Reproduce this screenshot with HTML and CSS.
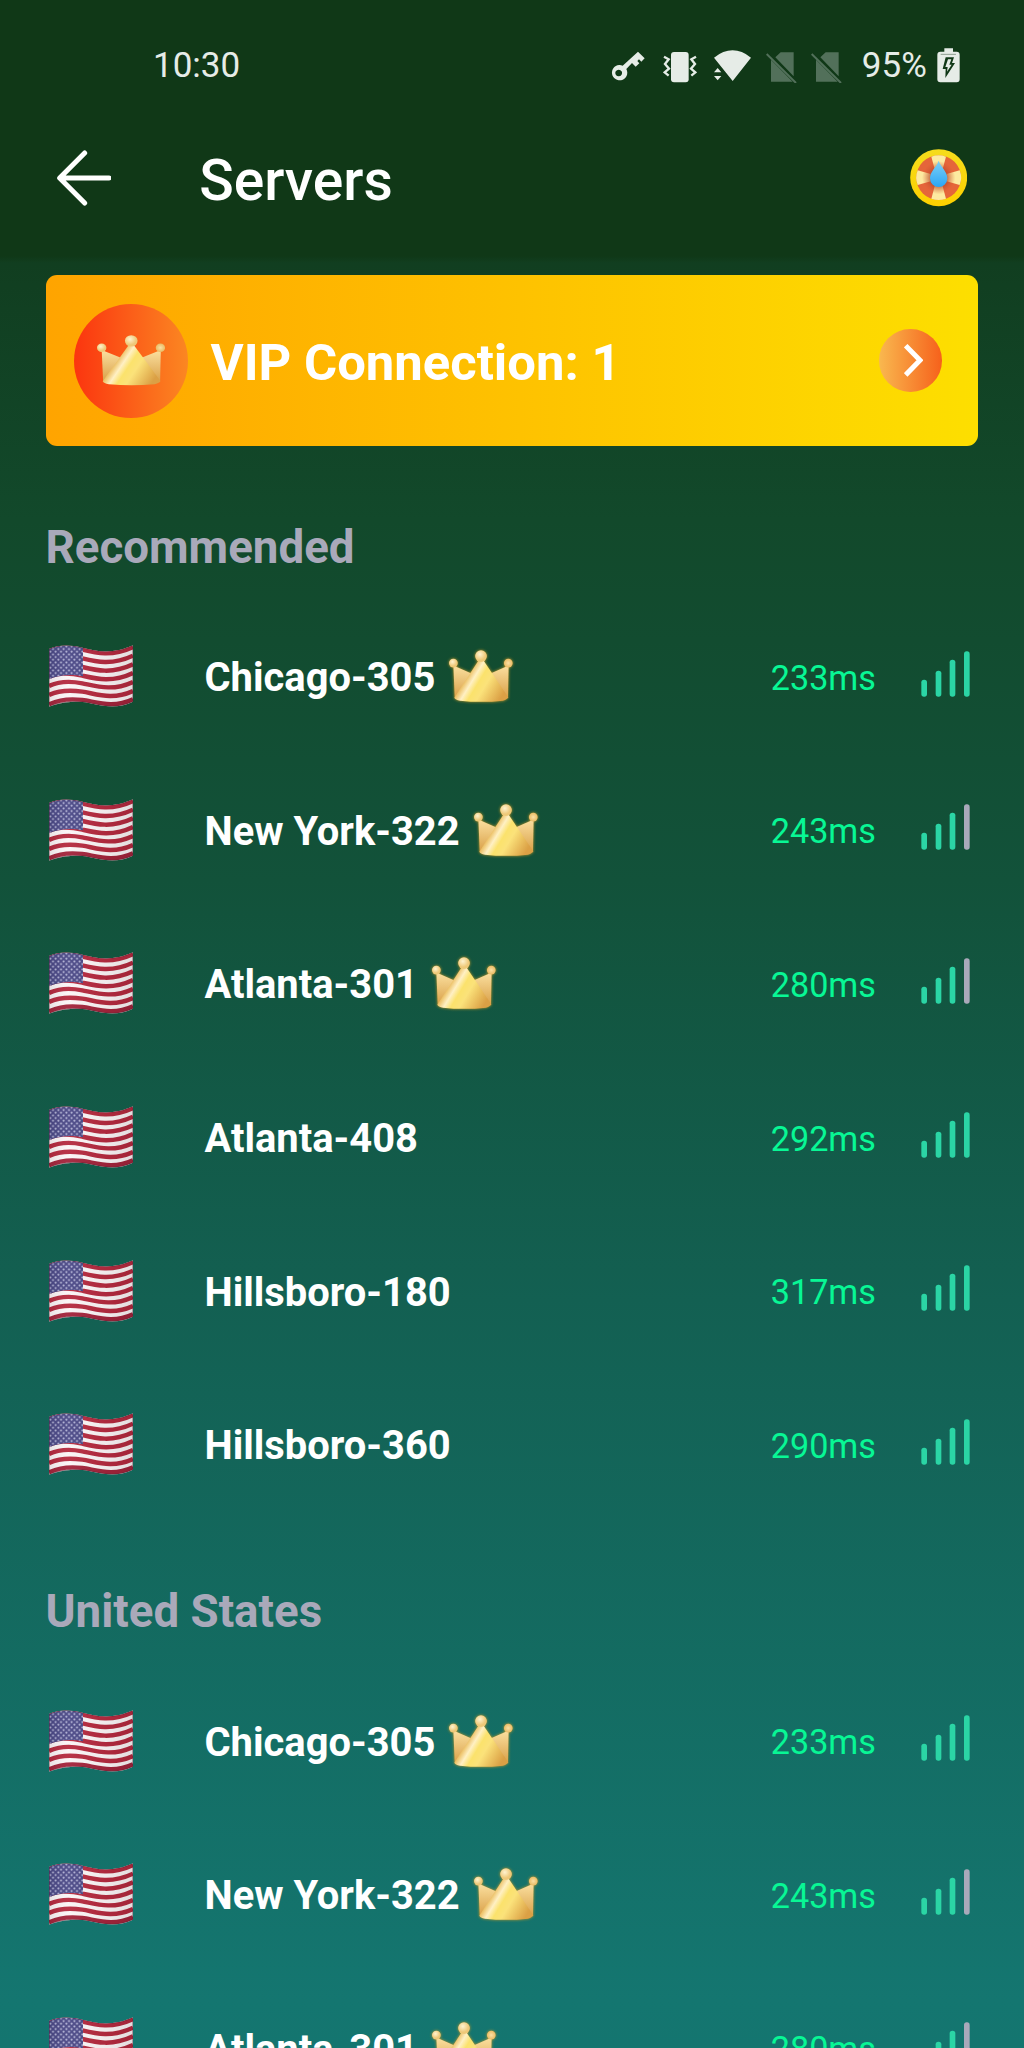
FILE: index.html
```html
<!DOCTYPE html>
<html lang="en">
<head>
<meta charset="utf-8">
<title>Servers</title>
<link rel="stylesheet" href="styles.css">
</head>
<body>
<svg class="defs" width="0" height="0" aria-hidden="true">
  <defs>
    <linearGradient id="gold" x1="17" y1="70" x2="150" y2="150" gradientUnits="userSpaceOnUse">
      <stop offset="0" stop-color="#dca64c"/><stop offset=".25" stop-color="#edc36b"/><stop offset=".36" stop-color="#fff0c4"/><stop offset=".48" stop-color="#fbe26c"/><stop offset=".62" stop-color="#fbe27a"/><stop offset="1" stop-color="#dba045"/>
    </linearGradient>
    <linearGradient id="goldSide" x1="0" y1="0" x2="0" y2="1"><stop offset="0" stop-color="#fbe0a0"/><stop offset="1" stop-color="#d9a048"/></linearGradient>
    <radialGradient id="ball" cx=".4" cy=".35"><stop offset="0" stop-color="#fff3cf"/><stop offset="1" stop-color="#eec878"/></radialGradient>
    <radialGradient id="ballRight"><stop offset="0" stop-color="#fbe0a4"/><stop offset="1" stop-color="#e9bb64"/></radialGradient>
    <linearGradient id="drop" x1="0" y1="0" x2="0" y2="1"><stop offset="0" stop-color="#7fd0f5"/><stop offset="1" stop-color="#2ba6f5"/></linearGradient>
    <linearGradient id="ring" x1="0" y1="0" x2="0" y2="1"><stop offset="0" stop-color="#f6dc1c"/><stop offset="1" stop-color="#fdd000"/></linearGradient>
    <radialGradient id="hub"><stop offset=".4" stop-color="#a8402a" stop-opacity=".85"/><stop offset="1" stop-color="#d85a30" stop-opacity="0"/></radialGradient>
    <linearGradient id="cloth" x1="0" y1="0" x2="1" y2="0"><stop offset="0" stop-color="#000" stop-opacity=".08"/><stop offset=".22" stop-color="#fff" stop-opacity=".05"/><stop offset=".7" stop-color="#000" stop-opacity=".05"/><stop offset="1" stop-color="#000" stop-opacity=".1"/></linearGradient>
    <pattern id="stars" width="16" height="16" patternUnits="userSpaceOnUse"><circle cx="4" cy="4" r="3" fill="#c3c3e2"/><circle cx="12" cy="12" r="3" fill="#c3c3e2"/></pattern>
    <clipPath id="flagShape"><path d="M0 12C25 0 60-2 100 8S190 30 252 1V170C190 200 140 174 100 171S25 176 0 185Z"/></clipPath>
  </defs>
  <symbol id="crown" viewBox="0 0 190 158" preserveAspectRatio="none">
    <path d="M13 46L75 74L17 143Z" fill="url(#goldSide)"/>
    <path d="M177 46L115 74L175 143Z" fill="url(#goldSide)"/>
    <path d="M87 32Q95 26 103 32L176 141Q174 147 160 151Q95 158 33 151Q18 148 16 142Z" fill="url(#gold)"/>
    <circle cx="13" cy="39" r="13" fill="url(#ball)"/><circle cx="95" cy="18" r="17.5" fill="url(#ball)"/><circle cx="176" cy="39" r="13" fill="url(#ballRight)"/>
  </symbol>
  <symbol id="flag" viewBox="0 0 252 186">
    <g clip-path="url(#flagShape)">
      <rect width="252" height="186" fill="#fbf5f6"/>
      <g fill="none" stroke="#b52a3f" stroke-width="13.2">
        <path d="M0 17C25 5 60 4 100 14S190 36 252 6"/>
        <path d="M0 43C25 31 60 30 100 40S190 62 252 32"/>
        <path d="M0 69C25 57 60 56 100 66S190 88 252 58"/>
        <path d="M0 96C25 84 60 83 100 92S190 114 252 84"/>
        <path d="M0 123C25 111 60 107 100 115S190 140 252 111"/>
        <path d="M0 150C25 138 60 134 100 140S190 167 252 138"/>
        <path d="M0 178C25 166 60 160 100 165S190 192 252 163" stroke="#a3243b"/>
      </g>
      <path d="M0 12C25 0 60-2 102 8V94C60 86 25 92 0 103Z" fill="#4a4886"/>
      <path d="M0 12C25 0 60-2 102 8V94C60 86 25 92 0 103Z" fill="url(#stars)"/>
      <path d="M0 12C25 0 60-2 100 8S190 30 252 1V170C190 200 140 174 100 171S25 176 0 185Z" fill="url(#cloth)" stroke="#602337" stroke-opacity=".55" stroke-width="4"/>
    </g>
  </symbol>
  <symbol id="bars" viewBox="0 0 147 138">
    <rect x="1" y="86" width="17" height="51" rx="8"/><rect x="44" y="59" width="17" height="78" rx="8"/><rect x="86" y="26" width="17" height="111" rx="8"/><rect class="last" x="129" y="1" width="17" height="136" rx="8"/>
  </symbol>
  <symbol id="nosim" viewBox="497 50 93 110">
    <path d="M541 66H580V138L525 81ZM512 88L577 154H512Z"/><path d="M499 71L587 158" fill="none" stroke="currentColor" stroke-width="6"/>
  </symbol>
</svg>

<div class="screen">
  <header class="top">
    <div class="status">
      <span class="clock">10:30</span>
      <div class="tray">
        <svg class="key" viewBox="33 50 102 110"><path fill-rule="evenodd" d="M114 64L134 84L124 94L117 87L112 92L118 99L107 109L96 98L79 116A23 23 0 1 1 68 106ZM56 118A10 10 0 1 0 56.100 118Z"/></svg>
        <svg class="vibrate" viewBox="190 50 102 110"><rect x="214" y="65" width="53" height="91" rx="9"/><path fill="none" stroke="currentColor" stroke-width="7" d="M193 79L207 87L196 101L208 115L195 126L207 136M289 79L275 87L286 101L274 115L287 126L275 136"/></svg>
        <svg class="wifi" viewBox="342 50 111 110"><path d="M342 82Q398 38 453 82L398 152ZM342 126L353 113L364 126ZM342 137H364L353 150Z"/></svg>
        <svg class="sim"><use href="#nosim"/></svg>
        <svg class="sim second"><use href="#nosim"/></svg>
        <span class="percent">95%</span>
        <svg class="battery" viewBox="1012 50 69 110"><path fill-rule="evenodd" d="M1034 54H1060V64H1071Q1080 64 1080 73V147Q1080 156 1071 156H1022Q1013 156 1013 147V73Q1013 64 1022 64H1034ZM1038 81L1029 116H1038L1037 143L1066 98H1057L1063 81Z"/><path d="M1045 87H1055L1049 103H1056L1042 124L1044 110H1037Z"/><path d="M1023 72H1069" stroke="#8d9d90" stroke-width="3"/></svg>
      </div>
    </div>
    <div class="nav">
      <svg class="back" viewBox="80 88 164 168"><path d="M163 97L88 172L163 247M90 172H236" fill="none" stroke="#fff" stroke-width="15" stroke-linecap="round" stroke-linejoin="round"/></svg>
      <h1>Servers</h1>
      <svg class="help" viewBox="0 0 172 172"><circle cx="86" cy="86" r="85.500" fill="url(#ring)"/><circle cx="86" cy="86" r="67" fill="#e5653a"/><path d="M64 23Q86 15 108 23L97 64H75ZM64 149Q86 157 108 149L97 108H75ZM23 64Q14 86 23 108L62 97V75ZM149 64Q158 86 149 108L110 97V75Z" fill="#fdeaa0"/><circle cx="86" cy="86" r="50" fill="url(#hub)"/><path d="M86 35C92 54 112 67 112 88A26 26 0 0 1 60 88C60 67 80 54 86 35Z" fill="url(#drop)"/></svg>
    </div>
  </header>

  <main>
    <section class="vip">
      <div class="badge"><svg><use href="#crown"/></svg></div>
      <span class="vip-title">VIP Connection: 1</span>
      <div class="go"><svg viewBox="0 0 58 98"><path d="M5 5L48 49L5 93" fill="none" stroke="#fff" stroke-width="15"/></svg></div>
    </section>

    <h2>Recommended</h2>
    <ul>
      <li><svg class="flag"><use href="#flag"/></svg><b>Chicago-305</b><svg class="crown"><use href="#crown"/></svg><span class="ping">233ms</span><svg class="bars"><use href="#bars"/></svg></li>
      <li><svg class="flag"><use href="#flag"/></svg><b>New York-322</b><svg class="crown"><use href="#crown"/></svg><span class="ping">243ms</span><svg class="bars weak"><use href="#bars"/></svg></li>
      <li><svg class="flag"><use href="#flag"/></svg><b>Atlanta-301</b><svg class="crown"><use href="#crown"/></svg><span class="ping">280ms</span><svg class="bars weak"><use href="#bars"/></svg></li>
      <li><svg class="flag"><use href="#flag"/></svg><b>Atlanta-408</b><span class="ping">292ms</span><svg class="bars"><use href="#bars"/></svg></li>
      <li><svg class="flag"><use href="#flag"/></svg><b>Hillsboro-180</b><span class="ping">317ms</span><svg class="bars"><use href="#bars"/></svg></li>
      <li><svg class="flag"><use href="#flag"/></svg><b>Hillsboro-360</b><span class="ping">290ms</span><svg class="bars"><use href="#bars"/></svg></li>
    </ul>

    <h2>United States</h2>
    <ul>
      <li><svg class="flag"><use href="#flag"/></svg><b>Chicago-305</b><svg class="crown"><use href="#crown"/></svg><span class="ping">233ms</span><svg class="bars"><use href="#bars"/></svg></li>
      <li><svg class="flag"><use href="#flag"/></svg><b>New York-322</b><svg class="crown"><use href="#crown"/></svg><span class="ping">243ms</span><svg class="bars weak"><use href="#bars"/></svg></li>
      <li><svg class="flag"><use href="#flag"/></svg><b>Atlanta-301</b><svg class="crown"><use href="#crown"/></svg><span class="ping">280ms</span><svg class="bars weak"><use href="#bars"/></svg></li>
    </ul>
  </main>
</div>
</body>
</html>
```

FILE: styles.css
```css
* { box-sizing: border-box; margin: 0; padding: 0; }
body { font-family: Roboto, "Liberation Sans", sans-serif; color: #fff; }
svg { display: block; flex: none; }
.defs { position: absolute; }

.screen {
  width: 1024px;
  height: 2048px;
  overflow: hidden;
  background: linear-gradient(#103817 0 256px, #113e20 263px, #12492b 520px, #12523a 880px, #136052 1300px, #147670 2000px, #14756f);
}

.top { height: 260px; }
.status {
  height: 112px;
  padding: 46.67px 63.7px 0 153px;
  display: flex;
  justify-content: space-between;
  color: #e6ece7;
  fill: currentColor;
  font-size: 35px;
  line-height: 37px;
}
.tray { display: flex; }
.tray svg { height: 36.67px; }
.key { width: 34px; }
.vibrate { width: 34px; margin-left: 18.3px; }
.wifi { width: 37px; margin-left: 16.7px; }
.tray .sim { width: 31px; margin-left: 14.7px; color: #52705a; }
.tray .second { margin-left: 14.6px; }
.percent { width: 64px; margin-left: 19.5px; white-space: nowrap; }
.battery { width: 23px; margin-left: 11.5px; }

.nav { height: 132px; padding: 0 57px 0 56.5px; display: flex; align-items: center; }
.back { width: 54.67px; height: 56px; }
h1 { margin-left: 88px; padding-top: 5px; font-size: 57px; font-weight: 500; line-height: 64px; }
.help { width: 57.33px; height: 57.33px; margin-left: auto; }

main { padding: 15px 45.5px 0; }
.vip {
  width: 932.5px;
  height: 171px;
  padding: 0 36.5px 0 28.5px;
  display: flex;
  align-items: center;
  border-radius: 11px;
  background: linear-gradient(90deg, #ffa400, #fddf00);
}
.badge {
  width: 114px; height: 114px;
  display: grid; place-items: center;
  border-radius: 50%;
  background: linear-gradient(90deg, #fb350f, #fb8722);
}
.badge svg { width: 68.5px; height: 51.5px; }
.vip-title { margin-left: 22.5px; padding-top: 4px; font-size: 50.8px; font-weight: 700; }
.go {
  width: 62.5px; height: 62.5px;
  margin-left: auto;
  padding-left: 7px;
  display: grid; place-items: center;
  border-radius: 50%;
  background: linear-gradient(90deg, #f9b84f, #f6611b);
}
.go svg { width: 19.3px; height: 32.7px; }

h2 { height: 142.7px; padding-top: 64px; font-size: 45.7px; line-height: 54px; font-weight: 700; color: #a9a9ba; }
.vip + h2 { height: 153px; padding-top: 75px; }
ul { list-style: none; }
li { height: 153.6px; display: flex; align-items: center; padding: 0 8.5px 0 3px; }
.flag { width: 84px; height: 62px; margin-top: 1px; }
b { margin-left: 72px; padding-top: 4px; font-size: 39.9px; font-weight: 700; }
.crown { width: 64px; height: 53px; margin: 2px 0 0 14px; filter: drop-shadow(0 0 1.5px #c79a28); }
.ping { margin-left: auto; padding-top: 4px; font-size: 34.2px; color: #08f795; }
.bars { width: 49px; height: 46px; margin: -4px 0 0 45px; fill: #2bd5a5; --last: #2bd5a5; }
.weak { --last: #a9a9ba; }
.last { fill: var(--last); }
```
